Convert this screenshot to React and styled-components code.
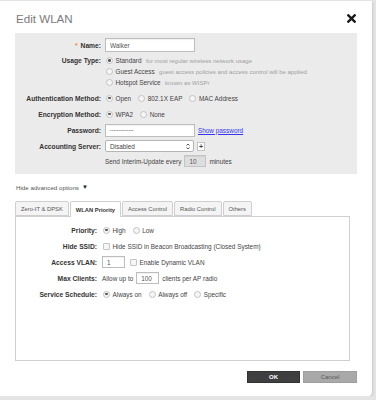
import React from 'react';
import styled, { createGlobalStyle } from 'styled-components';

const Global = createGlobalStyle`
  body {
    margin: 0;
    padding-top: 1px;
    background: #e4e4e4;
    font-family: "Liberation Sans", Arial, sans-serif;
  }
`;

const Dialog = styled.div`
  width: 372px;
  height: 395px;
  box-sizing: border-box;
  background: #fff;
  border-radius: 0 0 4px 0;
  box-shadow: 1px 1px 2px rgba(0, 0, 0, 0.12);
  padding: 0 15px;
  display: flex;
  flex-direction: column;
  color: #444;
  font-size: 6.4px;
`;

const Header = styled.div`
  height: 32px;
  display: flex;
  align-items: center;
  justify-content: space-between;
`;

const Title = styled.div`
  font-size: 11.6px;
  color: #7a7a7a;
  padding-left: 1px;
  padding-top: 2px;
`;

const Close = styled.svg`
  width: 9px;
  height: 9px;
  margin-right: 1px;
  margin-top: 2px;
`;

const Panel = styled.div`
  background: #ebebeb;
  padding: 4px 0 6px;
  display: flex;
  flex-direction: column;
`;

const Row = styled.div`
  display: grid;
  grid-template-columns: ${p => p.$label}px 1fr;
  height: ${p => p.$h || 16}px;
  margin-top: ${p => p.$mt || 0}px;
  align-items: center;
`;

const Label = styled.div`
  text-align: right;
  padding-right: ${p => p.$pad || 4}px;
  font-weight: bold;
  font-size: 6.7px;
  color: #333;
  white-space: nowrap;
`;

const Req = styled.span`
  color: #f08a3c;
  margin-right: 3px;
`;

const Values = styled.div`
  display: flex;
  align-items: center;
  white-space: nowrap;
`;

const Option = styled.label`
  display: flex;
  align-items: center;
  gap: 2.5px;
  margin-right: ${p => p.$mr ?? 6}px;
  margin-left: ${p => p.$ml ?? 0}px;
  color: #444;
`;

const Radio = styled.span`
  width: 5px;
  height: 5px;
  border-radius: 50%;
  border: 0.8px solid #c2c2c2;
  background: #f6f6f6;
  margin-left: 1px;
  display: flex;
  align-items: center;
  justify-content: center;
  &::after {
    content: '';
    width: 2.3px;
    height: 2.3px;
    border-radius: 50%;
    background: ${p => (p.$on ? '#555' : 'transparent')};
  }
`;

const Check = styled.span`
  width: 5px;
  height: 5px;
  border: 0.8px solid #c4c4c4;
  border-radius: 1px;
  background: #f6f6f6;
  margin-left: 1px;
`;

const Hint = styled.span`
  color: #a0a0a0;
  font-size: 6px;
  margin-left: 2px;
`;

const Input = styled.div`
  width: ${p => p.$w}px;
  height: ${p => p.$h || 13}px;
  box-sizing: border-box;
  border: 1px solid ${p => (p.$disabled ? '#c4c4c4' : '#bdbdbd')};
  background: ${p => (p.$disabled ? '#dedede' : '#fff')};
  box-shadow: inset 0 1px 1px rgba(0, 0, 0, 0.06);
  display: flex;
  align-items: center;
  padding-left: 4px;
  color: #555;
  margin: 0 ${p => p.$mx || 0}px;
`;

const Dots = styled.span`
  font-size: 4px;
  letter-spacing: 0.3px;
  color: #777;
`;

const Link = styled.a`
  color: #3535f0;
  text-decoration: underline;
  margin-left: 3px;
`;

const Select = styled.div`
  width: 89px;
  height: 12px;
  box-sizing: border-box;
  border: 1px solid #b5b5b5;
  border-radius: 2px;
  background: #fff;
  display: flex;
  align-items: center;
  justify-content: space-between;
  padding: 0 3px 0 4px;
  color: #444;
`;

const Plus = styled.div`
  width: 8px;
  height: 9px;
  box-sizing: border-box;
  border: 1px solid #c4c4c4;
  background: #fff;
  margin-left: 3px;
  display: flex;
  align-items: center;
  justify-content: center;
  font-weight: bold;
  font-size: 7px;
  color: #444;
`;

const Toggle = styled.div`
  height: 26px;
  display: flex;
  align-items: center;
  color: #555;
  gap: 3px;
  padding-left: 1px;
  font-size: 6.2px;
`;

const Tri = styled.span`
  color: #222;
  font-size: 6px;
`;

const TabBar = styled.div`
  display: flex;
  gap: 1px;
  height: 15px;
  margin-top: 1px;
  align-items: flex-start;
`;

const Tab = styled.div`
  position: relative;
  z-index: 1;
  box-sizing: border-box;
  height: ${p => (p.$active ? 16 : 15)}px;
  padding: 0 5px;
  border: 1px solid #cfcfcf;
  border-bottom: ${p => (p.$active ? 'none' : '1px solid #cfcfcf')};
  border-radius: 2px 2px 0 0;
  background: ${p => (p.$active ? '#fff' : '#f4f4f4')};
  font-size: 5.8px;
  font-weight: ${p => (p.$active ? 'bold' : 'normal')};
  color: ${p => (p.$active ? '#333' : '#555')};
  display: flex;
  align-items: center;
  white-space: nowrap;
`;

const TabBody = styled.div`
  height: 145px;
  box-sizing: border-box;
  border: 1px solid #cfcfcf;
  margin-right: 7px;
  padding-top: 5px;
`;

const Footer = styled.div`
  display: flex;
  justify-content: flex-end;
  gap: 3px;
  margin-top: 10px;
`;

const Button = styled.div`
  width: ${p => p.$w}px;
  height: 12px;
  display: flex;
  align-items: center;
  justify-content: center;
  font-size: 6px;
  font-weight: ${p => (p.$primary ? 'bold' : 'normal')};
  background: ${p => (p.$primary ? '#3f3f3f' : '#a9a9a9')};
  color: ${p => (p.$primary ? '#fff' : '#5a5a5a')};
  border: 1px solid ${p => (p.$primary ? '#333' : '#9e9e9e')};
  box-sizing: border-box;
`;

const PANEL_LABEL = 90;
const TAB_LABEL = 86;

export default function App() {
  return (
    <>
      <Global />
      <Dialog>
        <Header>
          <Title>Edit WLAN</Title>
          <Close viewBox="0 0 10 10">
            <path d="M1.5 1.5 L8.5 8.5 M8.5 1.5 L1.5 8.5" stroke="#1a1a1a" strokeWidth="2.6" strokeLinecap="square" />
          </Close>
        </Header>

        <Panel>
          <Row $label={PANEL_LABEL}>
            <Label><Req>*</Req>Name:</Label>
            <Values><Input $w={90} $h={14}>Walker</Input></Values>
          </Row>
          <Row $label={PANEL_LABEL} $h={11} $mt={2}>
            <Label>Usage Type:</Label>
            <Values>
              <Option><Radio $on />Standard<Hint>for most regular wireless network usage</Hint></Option>
            </Values>
          </Row>
          <Row $label={PANEL_LABEL} $h={11}>
            <Label />
            <Values>
              <Option><Radio />Guest Access<Hint>guest access policies and access control will be applied</Hint></Option>
            </Values>
          </Row>
          <Row $label={PANEL_LABEL} $h={11}>
            <Label />
            <Values>
              <Option><Radio />Hotspot Service<Hint>known as WISPr</Hint></Option>
            </Values>
          </Row>
          <Row $label={PANEL_LABEL} $mt={2}>
            <Label>Authentication Method:</Label>
            <Values>
              <Option><Radio $on />Open</Option>
              <Option><Radio />802.1X EAP</Option>
              <Option><Radio />MAC Address</Option>
            </Values>
          </Row>
          <Row $label={PANEL_LABEL}>
            <Label>Encryption Method:</Label>
            <Values>
              <Option><Radio $on />WPA2</Option>
              <Option><Radio />None</Option>
            </Values>
          </Row>
          <Row $label={PANEL_LABEL}>
            <Label>Password:</Label>
            <Values>
              <Input $w={90} $h={13}><Dots>••••••••••••••</Dots></Input>
              <Link>Show password</Link>
            </Values>
          </Row>
          <Row $label={PANEL_LABEL}>
            <Label>Accounting Server:</Label>
            <Values>
              <Select>
                Disabled
                <svg width="4" height="7" viewBox="0 0 4 7">
                  <path d="M0.5 2.6 L2 1 L3.5 2.6 M0.5 4.4 L2 6 L3.5 4.4" stroke="#333" strokeWidth="0.8" fill="none" />
                </svg>
              </Select>
              <Plus>+</Plus>
            </Values>
          </Row>
          <Row $label={PANEL_LABEL} $h={14}>
            <Label />
            <Values>
              Send Interim-Update every
              <Input $w={22} $h={12} $disabled $mx={3}>10</Input>
              minutes
            </Values>
          </Row>
        </Panel>

        <Toggle>Hide advanced options <Tri>▼</Tri></Toggle>

        <TabBar>
          <Tab>Zero-IT &amp; DPSK</Tab>
          <Tab $active>WLAN Priority</Tab>
          <Tab>Access Control</Tab>
          <Tab>Radio Control</Tab>
          <Tab>Others</Tab>
        </TabBar>
        <TabBody>
          <Row $label={TAB_LABEL}>
            <Label $pad={5}>Priority:</Label>
            <Values>
              <Option><Radio $on />High</Option>
              <Option><Radio />Low</Option>
            </Values>
          </Row>
          <Row $label={TAB_LABEL}>
            <Label $pad={5}>Hide SSID:</Label>
            <Values>
              <Option><Check />Hide SSID in Beacon Broadcasting (Closed System)</Option>
            </Values>
          </Row>
          <Row $label={TAB_LABEL}>
            <Label $pad={5}>Access VLAN:</Label>
            <Values>
              <Input $w={23} $h={12}>1</Input>
              <Option $ml={4}><Check />Enable Dynamic VLAN</Option>
            </Values>
          </Row>
          <Row $label={TAB_LABEL}>
            <Label $pad={5}>Max Clients:</Label>
            <Values>
              Allow up to
              <Input $w={23} $h={12} $mx={3}>100</Input>
              clients per AP radio
            </Values>
          </Row>
          <Row $label={TAB_LABEL}>
            <Label $pad={5}>Service Schedule:</Label>
            <Values>
              <Option><Radio $on />Always on</Option>
              <Option><Radio />Always off</Option>
              <Option><Radio />Specific</Option>
            </Values>
          </Row>
        </TabBody>

        <Footer>
          <Button $primary $w={53}>OK</Button>
          <Button $w={54}>Cancel</Button>
        </Footer>
      </Dialog>
    </>
  );
}
